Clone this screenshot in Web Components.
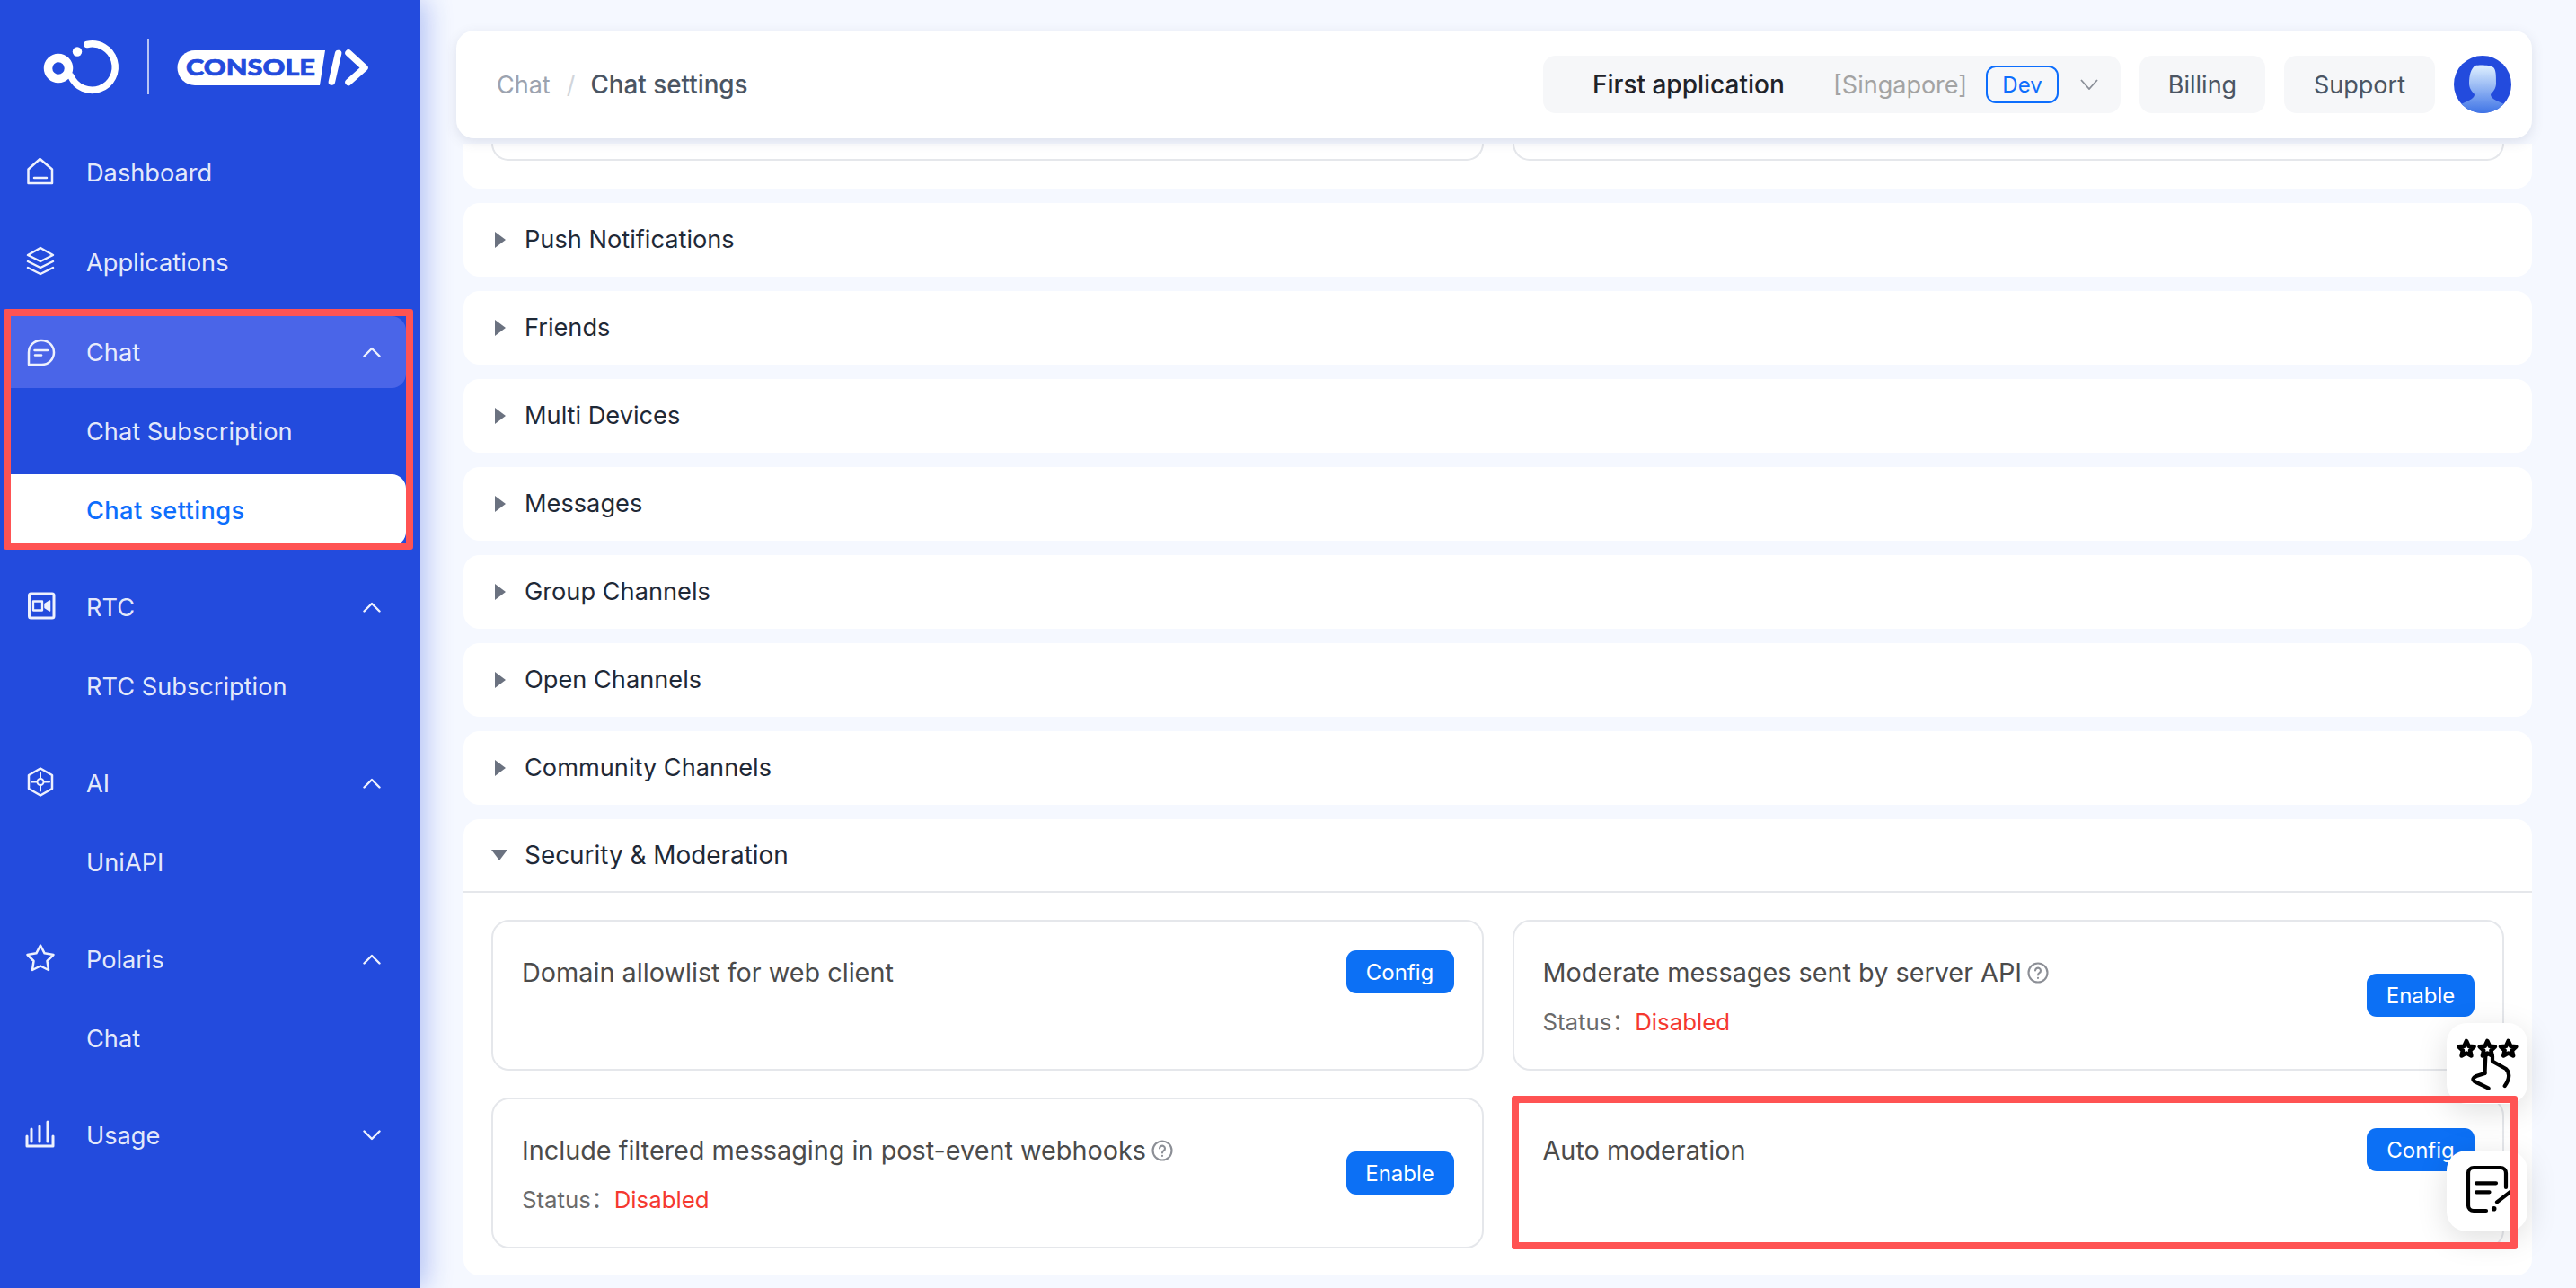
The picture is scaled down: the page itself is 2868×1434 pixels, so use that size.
<!DOCTYPE html>
<html lang="en">
<head>
<meta charset="utf-8">
<title>Chat settings</title>
<style>
html,body{margin:0;padding:0;height:100%;overflow:hidden;background:#f5f8ff;font-family:Inter,"Noto Sans CJK SC",sans-serif;font-optical-sizing:none;}
</style>
</head>
<body>
<app-shell>
  <side-nav slot="side">
    <nav-item icon="home" label="Dashboard"></nav-item>
    <nav-item icon="layers" label="Applications"></nav-item>
    <nav-group>
      <nav-item icon="chat" label="Chat" chevron="up" active></nav-item>
      <nav-item label="Chat Subscription"></nav-item>
      <nav-item label="Chat settings" current></nav-item>
    </nav-group>
    <nav-group>
      <nav-item icon="rtc" label="RTC" chevron="up"></nav-item>
      <nav-item label="RTC Subscription"></nav-item>
    </nav-group>
    <nav-group>
      <nav-item icon="ai" label="AI" chevron="up"></nav-item>
      <nav-item label="UniAPI"></nav-item>
    </nav-group>
    <nav-group>
      <nav-item icon="star" label="Polaris" chevron="up"></nav-item>
      <nav-item label="Chat"></nav-item>
    </nav-group>
    <nav-item icon="usage" label="Usage" chevron="down"></nav-item>
  </side-nav>
  <top-bar></top-bar>
  <fold-panel stub>
    <set-card stub></set-card>
    <set-card stub></set-card>
  </fold-panel>
  <fold-panel label="Push Notifications"></fold-panel>
  <fold-panel label="Friends"></fold-panel>
  <fold-panel label="Multi Devices"></fold-panel>
  <fold-panel label="Messages"></fold-panel>
  <fold-panel label="Group Channels"></fold-panel>
  <fold-panel label="Open Channels"></fold-panel>
  <fold-panel label="Community Channels"></fold-panel>
  <fold-panel label="Security &amp; Moderation" open>
    <set-card label="Domain allowlist for web client" action="Config"></set-card>
    <set-card label="Moderate messages sent by server API" action="Enable" help status="Disabled"></set-card>
    <set-card label="Include filtered messaging in post-event webhooks" action="Enable" help status="Disabled"></set-card>
    <set-card label="Auto moderation" action="Config"></set-card>
  </fold-panel>
  <float-btn slot="over" icon="rate" style="left:2724px;top:1139px"></float-btn>
  <float-btn slot="over" icon="note" style="left:2724px;top:1281px"></float-btn>
  <red-mark slot="over" style="left:4px;top:344px;width:456px;height:268px"></red-mark>
  <red-mark slot="over" style="left:1683px;top:1220px;width:1120px;height:171px"></red-mark>
</app-shell>

<template id="t-shell">
  <style>
    :host{display:grid;grid-template-columns:468px 1fr;width:2868px;height:1434px;overflow:hidden;position:relative;background:#f5f8ff;}
    .side{grid-column:1;position:relative;z-index:3;box-shadow:6px 0 28px rgba(35,75,221,.32);background:#234bdd;}
    .main{grid-column:2;display:flex;flex-direction:column;padding:0 49px 0 40px;overflow:hidden;min-width:0;}
  </style>
  <div class="side"><slot name="side"></slot></div>
  <div class="main"><slot></slot></div>
  <slot name="over"></slot>
</template>

<template id="t-side">
  <style>
    :host{display:flex;flex-direction:column;gap:20px;height:1434px;box-sizing:border-box;background:#234bdd;}
    .logo{display:block;width:468px;height:152px;margin-bottom:-20px;flex:none;}
  </style>
  <svg class="logo" viewBox="0 0 468 152" fill="none">
    <circle cx="65" cy="76" r="11.5" stroke="#fff" stroke-width="9.5"/>
    <path d="M97 49.5A25.7 25.7 0 1 1 79 85" stroke="#fff" stroke-width="7.5" stroke-linecap="round"/>
    <circle cx="86" cy="57.5" r="5.2" fill="#fff"/>
    <path d="M165 43V105" stroke="#fff" stroke-opacity=".85" stroke-width="1.6"/>
    <path d="M217 56H362L356 95H217A19.5 19.5 0 0 1 217 56Z" fill="#fff"/>
    <text x="207" y="84" textLength="144" lengthAdjust="spacingAndGlyphs" font-family="Lato,Inter,sans-serif" font-weight="900" font-size="25.5" fill="#234bdd" stroke="#234bdd" stroke-width=".7">CONSOLE</text>
    <path d="M376.6 59.5L369.4 91" stroke="#fff" stroke-width="7.5" stroke-linecap="round"/>
    <path d="M388 59L406 75.5L388 91.5" stroke="#fff" stroke-width="7.5" stroke-linecap="round" stroke-linejoin="round"/>
  </svg>
  <slot></slot>
</template>

<template id="t-group">
  <style>:host{display:flex;flex-direction:column;gap:8px;margin-bottom:8px;flex:none;}</style>
  <slot></slot>
</template>

<template id="t-item">
  <style>
    :host{display:flex;align-items:center;height:80px;margin:0 16px 0 8px;padding:0 28px 0 19px;border-radius:0 16px 16px 0;color:rgba(255,255,255,.9);font-size:27.2px;line-height:1;flex:none;}
    :host([active]){background:#4a65e8;}
    :host([current]){background:#fff;color:#0d6efd;font-weight:500;letter-spacing:.4px;}
    .ic{width:36px;height:36px;flex:none;margin-right:33px;fill:none;stroke:#eef1fd;stroke-width:2.5;stroke-linejoin:round;stroke-linecap:round;}
    .ic.none{visibility:hidden;}
    .t{flex:1;white-space:nowrap;padding-top:2px;}
    .ch{width:20px;height:12px;flex:none;fill:none;stroke:#eef1fd;stroke-width:2.4;stroke-linecap:round;stroke-linejoin:round;}
  </style>
  <svg class="ic" viewBox="0 0 36 36"></svg><span class="t"></span>
</template>

<template id="t-bar">
  <style>
    :host{display:flex;align-items:center;flex:none;height:120px;margin:34px 0 6px;padding:0 23px 0 45px;background:#fff;border-radius:20px;box-shadow:0 4px 14px rgba(60,70,110,.13);position:relative;z-index:2;font-size:27px;}
    .crumb{display:flex;align-items:center;flex:1;white-space:nowrap;font-weight:500;font-size:27.8px;color:#4b5563;}
    .crumb .a{color:#9ca3af;font-weight:400;font-size:27px;}
    .crumb .s{color:#d1d5db;font-weight:400;font-size:27px;margin:0 17px 0 18px;}
    .pill{display:flex;align-items:center;justify-content:center;height:64px;background:#f6f7f9;border-radius:14px;color:#4b5563;margin-left:21px;white-space:nowrap;box-sizing:border-box;}
    .b{width:140px;}
    .u{width:168px;}
    .app{margin-left:0;width:643px;justify-content:flex-start;padding-left:55px;}
    .name{color:#1f2329;font-weight:500;font-size:28px;width:268px;}
    .reg{color:#a3a3a3;width:170px;}
    .dev{display:flex;align-items:center;justify-content:center;box-sizing:border-box;width:81px;height:42px;border:2px solid #0d6efd;border-radius:11px;color:#0d6efd;font-size:24px;margin-right:24px;}
    .chev{width:20px;height:12px;fill:none;stroke:#8a8f98;stroke-width:1.8;}
    .av{width:64px;height:64px;margin-left:21px;flex:none;display:block;}
  </style>
  <div class="crumb"><span class="a">Chat</span><span class="s">/</span><span>Chat settings</span></div>
  <div class="pill app"><span class="name">First application</span><span class="reg">[Singapore]</span><span class="dev">Dev</span>
    <svg class="chev" viewBox="0 0 20 12"><path d="M1 1L10 11L19 1"/></svg></div>
  <div class="pill b">Billing</div>
  <div class="pill u">Support</div>
  <svg class="av" viewBox="0 0 64 64">
    <defs>
      <linearGradient id="g" x1="0" y1="0" x2="0" y2="1"><stop offset="0" stop-color="#e0f1ff"/><stop offset="1" stop-color="#3f74e6"/></linearGradient>
      <clipPath id="c"><circle cx="32" cy="32" r="32"/></clipPath>
    </defs>
    <circle cx="32" cy="32" r="32" fill="#234bdd"/>
    <path clip-path="url(#c)" fill="url(#g)" d="M24 11C28 10 40 10 44 13C47 16 47 22 47 31C47 36 44 40 41 43C41 47 45 49 56 54L56 64H8V54C19 49 23 47 23 43C20 40 17 36 17 31C17 22 19 14 24 11Z"/>
  </svg>
</template>

<template id="t-panel">
  <style>
    :host{display:block;flex:none;margin:0 0 16px 8px;background:#fff;border-radius:18px;font-size:27.2px;color:#1f2937;}
    :host([stub]){height:50px;border-radius:0 0 18px 18px;overflow:hidden;}
    .head{display:flex;align-items:center;height:82px;box-sizing:border-box;padding:0 0 1px 35px;white-space:nowrap;}
    :host([open]) .head{border-bottom:2px solid #e5e7eb;padding:0 0 0 31px;}
    :host([open]) .label{font-size:27.9px;}
    .tri{width:0;height:0;border-style:solid;border-width:9px 0 9px 12px;border-color:transparent transparent transparent #6b7280;margin-right:21px;}
    :host([open]) .tri{border-width:12px 9px 0 9px;border-color:#6b7280 transparent transparent transparent;margin-right:19px;}
    .body{display:none;}
    :host([open]) .body{display:grid;grid-template-columns:1fr 1fr;gap:30px 32px;padding:30px 31px;}
    :host([stub]) .head{display:none;}
    :host([stub]) .body{display:grid;grid-template-columns:1fr 1fr;gap:32px;padding:0 31px;}
  </style>
  <div class="head"><span class="tri"></span><span class="label"></span></div>
  <div class="body"><slot></slot></div>
</template>

<template id="t-card">
  <style>
    :host{display:flex;align-items:flex-start;box-sizing:border-box;height:168px;border:2px solid #e5e7eb;border-radius:20px;padding:32px 31px 0 32px;color:#4b4b4b;font-size:28.8px;}
    :host([help]){align-items:center;padding-top:0;}
    :host([help]) .txt{padding-top:4px;}
    :host([stub]){height:19px;border-top:0;border-radius:0 0 20px 20px;padding:0;}
    .txt{flex:1;min-width:0;}
    .title{display:flex;align-items:center;height:48px;white-space:nowrap;}
    .q{width:24px;height:24px;margin-left:6px;flex:none;fill:none;stroke:#8c8f96;stroke-width:2.1;stroke-linecap:round;}
    .st{font-size:25.8px;color:#6b6b6b;margin-top:7px;height:48px;line-height:48px;white-space:nowrap;}
    .st b{font-weight:400;color:#f5382f;}
    button{width:120px;height:48px;border:0;border-radius:11px;background:#0c70f5;color:#fff;font:400 24px Inter,sans-serif;font-optical-sizing:none;padding:0;flex:none;}
  </style>
  <div class="txt"><div class="title"><span class="label"></span></div></div>
</template>

<template id="t-float">
  <style>
    :host{position:absolute;display:block;width:90px;height:90px;background:#fff;border-radius:22px;box-shadow:0 8px 34px rgba(0,0,0,.13);z-index:4;}
    svg{display:block;width:90px;height:90px;fill:none;stroke:#000;stroke-width:4.2;stroke-linecap:round;stroke-linejoin:round;}
    use{stroke-width:4.6;}
  </style>
</template>

<template id="t-mark">
  <style>
    :host{position:absolute;display:block;box-sizing:border-box;border:8px solid #ff5353;border-radius:3px;z-index:5;pointer-events:none;}
  </style>
</template>

<script>
const ICONS = {
  home:'<path d="M4.5 14.5L17.5 3L31 14.5V30H4.5Z"/><path d="M11 24H25"/>',
  layers:'<path d="M18 2L32 10L18 17L4 10Z"/><path d="M4 17L18 24L32 17"/><path d="M4 24L18 31L32 24"/>',
  chat:'<path d="M5 32H19.500A13.500 13.500 0 0 0 19.500 5H18.500A13.500 13.500 0 0 0 5 18.500Z"/><path d="M11.500 16H26"/><path d="M12 21.500H19"/>',
  rtc:'<rect x="5.500" y="3" width="27.500" height="27" rx="2" stroke-width="3"/><rect x="10" y="11.500" width="10" height="10" stroke-width="2.300"/><path d="M28.500 11V22L23 18.500V14.500Z" fill="#eef1fd" stroke-width="1.500"/>',
  ai:'<path d="M18 1.500L31 9V24L18 31.500L5 24V9Z"/><circle cx="18" cy="16.500" r="3.500" stroke-width="2"/><path d="M18 6.500V12.500M18 20.500V26.500M8 16.500H14M22 16.500H28" stroke-width="2"/>',
  star:'<path d="M18 2.500L22.600 11.300L32.500 13L25.500 20L27 30L18 25.500L9 30L10.500 20L3.500 13L13.400 11.300Z"/>',
  usage:'<path d="M8 25V11M17 25V8M26 25V3" stroke-width="3"/><path d="M3 19V30H32V19" stroke-width="3"/>'
};
const FLOATS = {
  rate:'<defs><path id="s" d="M0-9L2.600-3.300L8.600-2.700L4.100 1.500L5.400 7.400L0 4.500L-5.400 7.400L-4.100 1.500L-8.600-2.700L-2.600-3.300Z"/></defs>'+
    '<use href="#s" x="22" y="29"/><use href="#s" x="45.300" y="29"/><use href="#s" x="68.700" y="29"/>'+
    '<path d="M42.500 56L43.300 37Q47 31 51 37V42.700L66 51Q73 58 64.700 70"/><path d="M42.500 56L33 59Q27 62 31 65L46.700 72.700"/>',
  note:'<path d="M44 67H30A6 6 0 0 1 24 61V25A6 6 0 0 1 30 19H60A6 6 0 0 1 66 25V41"/><path d="M33 36.300H55M33 46.300H47.500"/><circle cx="52.700" cy="64.700" r="2.800" fill="#000" stroke="none"/><path d="M56 57.300L76 42"/>'
};
function shell(el,id){
  const r=el.attachShadow({mode:'open'});
  r.appendChild(document.getElementById(id).content.cloneNode(true));
  return r;
}
class AppShell extends HTMLElement{constructor(){super();shell(this,'t-shell');}}
class SideNav extends HTMLElement{constructor(){super();shell(this,'t-side');}}
class NavGroup extends HTMLElement{constructor(){super();shell(this,'t-group');}}
class NavItem extends HTMLElement{
  constructor(){super();shell(this,'t-item');}
  connectedCallback(){
    const r=this.shadowRoot;
    r.querySelector('.t').textContent=this.getAttribute('label');
    const ic=r.querySelector('.ic');
    const n=this.getAttribute('icon');
    if(n) ic.innerHTML=ICONS[n]; else ic.classList.add('none');
    const c=this.getAttribute('chevron');
    if(c && !r.querySelector('.ch')){
      const d=c==='up'?'M1.500 10.500L10 2L18.500 10.500':'M1.500 1.500L10 10L18.500 1.500';
      r.appendChild(document.createRange().createContextualFragment('<svg class="ch" viewBox="0 0 20 12" xmlns="http://www.w3.org/2000/svg"><path d="'+d+'"/></svg>'));
    }
  }
}
class TopBar extends HTMLElement{constructor(){super();shell(this,'t-bar');}}
class FoldPanel extends HTMLElement{
  constructor(){super();shell(this,'t-panel');}
  connectedCallback(){this.shadowRoot.querySelector('.label').textContent=this.getAttribute('label')||'';}
}
class SetCard extends HTMLElement{
  constructor(){super();shell(this,'t-card');}
  connectedCallback(){
    const r=this.shadowRoot;
    if(this.hasAttribute('stub')){r.querySelector('.txt').remove();return;}
    r.querySelector('.label').textContent=this.getAttribute('label');
    if(this.hasAttribute('help')){
      r.querySelector('.title').insertAdjacentHTML('beforeend','<svg class="q" viewBox="0 0 24 24"><circle cx="12" cy="12" r="10.500"/><path d="M9 9.500A3 3 0 1 1 13.500 12.200C12.500 12.800 12 13.300 12 14.500"/><path d="M12 17.800V18"/></svg>');
    }
    const s=this.getAttribute('status');
    if(s) r.querySelector('.txt').insertAdjacentHTML('beforeend','<div class="st">Status：<b>'+s+'</b></div>');
    const b=document.createElement('button');
    b.textContent=this.getAttribute('action');
    r.appendChild(b);
  }
}
class FloatBtn extends HTMLElement{
  constructor(){super();shell(this,'t-float');}
  connectedCallback(){
    this.shadowRoot.appendChild(document.createRange().createContextualFragment('<svg viewBox="0 0 90 90" xmlns="http://www.w3.org/2000/svg">'+FLOATS[this.getAttribute('icon')]+'</svg>'));
  }
}
class RedMark extends HTMLElement{constructor(){super();shell(this,'t-mark');}}
customElements.define('app-shell',AppShell);
customElements.define('side-nav',SideNav);
customElements.define('nav-group',NavGroup);
customElements.define('nav-item',NavItem);
customElements.define('top-bar',TopBar);
customElements.define('fold-panel',FoldPanel);
customElements.define('set-card',SetCard);
customElements.define('float-btn',FloatBtn);
customElements.define('red-mark',RedMark);
</script>
</body>
</html>
